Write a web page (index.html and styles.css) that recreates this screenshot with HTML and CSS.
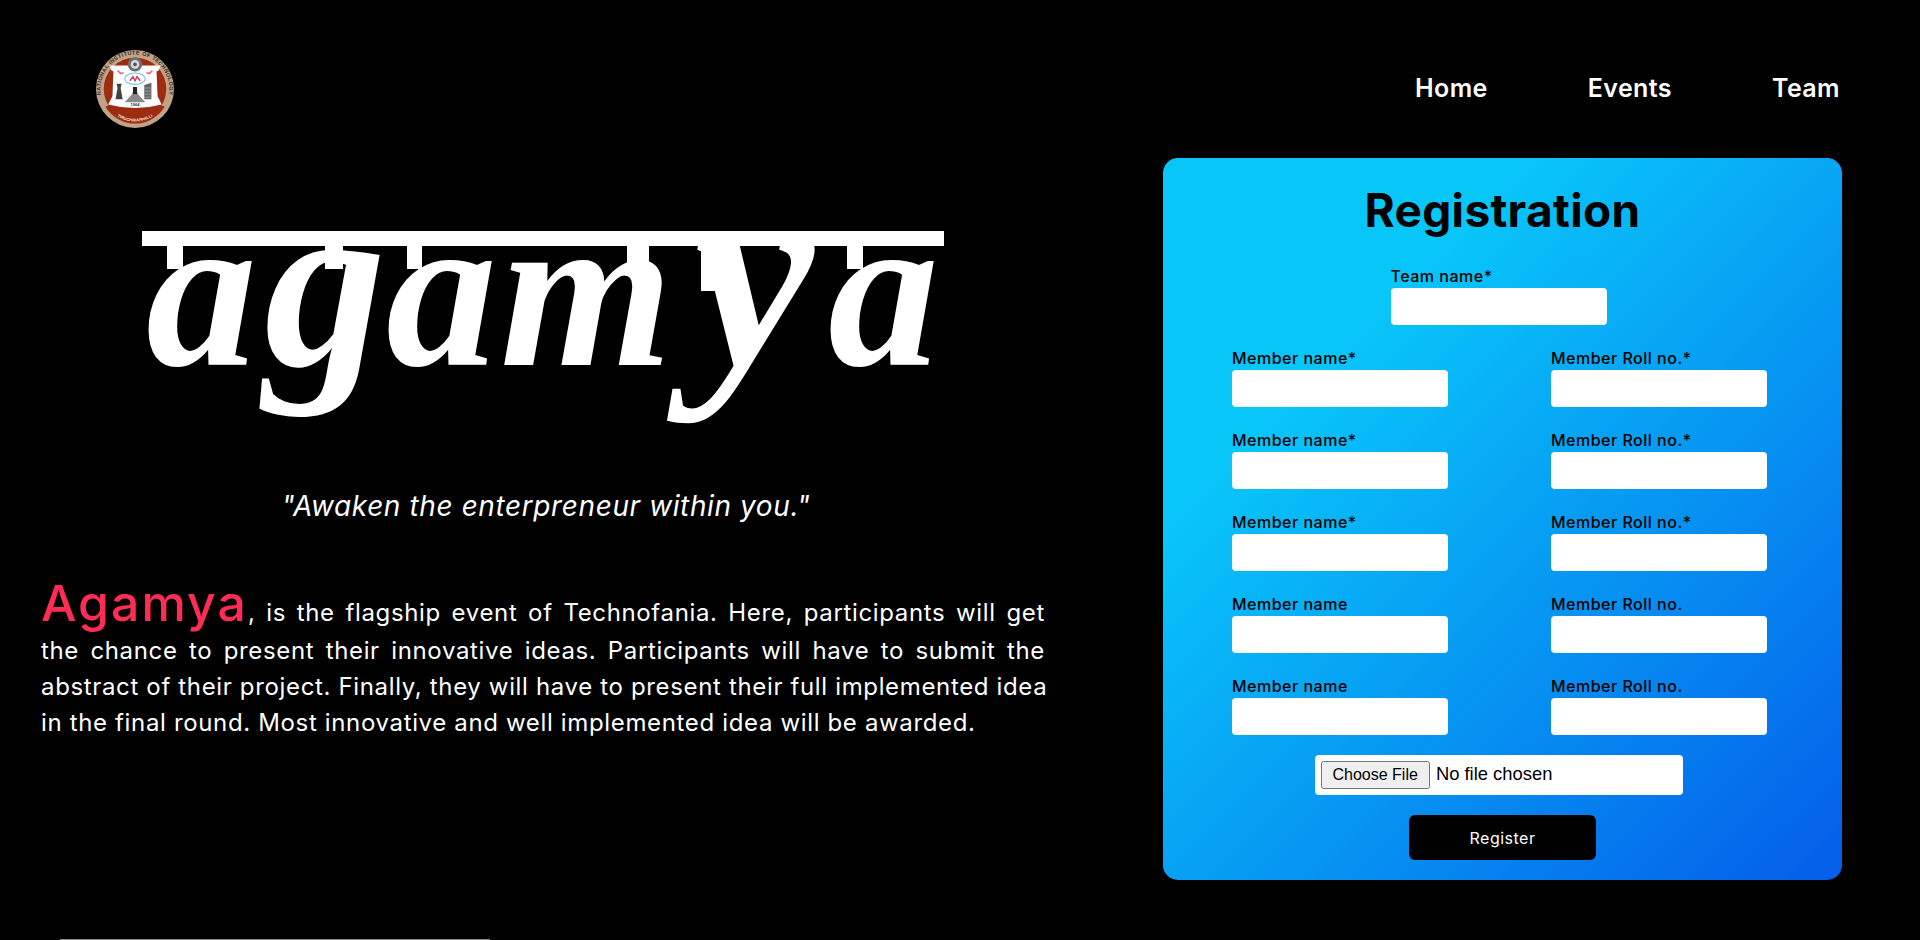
FILE: index.html
```html
<!DOCTYPE html>
<html lang="en">
<head>
<meta charset="utf-8">
<title>Agamya</title>
<link rel="stylesheet" href="styles.css">
</head>
<body>
<header class="site-header">
  <svg class="seal" viewBox="0 0 76 76" role="img" aria-label="National Institute of Technology Tiruchirappalli">
    <defs>
      <path id="sealTop" d="M9 54.8A33.5 33.5 0 1 1 67 54.8"/>
      <path id="sealBottom" d="M15 60A32 32 0 0 0 61 60"/>
    </defs>
    <circle cx="38" cy="38" r="38" fill="#bfa288"/>
    <circle cx="38" cy="38" r="30.5" fill="#9d2c10"/>
    <text class="seal-ring"><textPath href="#sealTop" startOffset="50%" text-anchor="middle">NATIONAL INSTITUTE OF TECHNOLOGY</textPath></text>
    <path d="M9 55A33.5 33.5 0 0 0 67 55L60 53H16Z" fill="#9d2c10"/>
    <text class="seal-city"><textPath href="#sealBottom" startOffset="50%" text-anchor="middle">TIRUCHIRAPPALLI</textPath></text>
    <path d="M13 15H63L61 20 59 21 60 45 64 53Q38 60 12 53L16 45 17 21 15 20Z" fill="#fff"/>
    <circle cx="38" cy="14" r="7" fill="#6d6d6d"/>
    <circle cx="38" cy="14" r="4.2" fill="#d9d9d9"/>
    <circle cx="38" cy="14" r="1.8" fill="#555"/>
    <path d="M21 20l3 3 3-1M55 20l-3 3-3-1" fill="none" stroke="#ee5a8c" stroke-width="1.4"/>
    <ellipse cx="38" cy="28" rx="10" ry="5.5" fill="#fff" stroke="#6cc0e8" stroke-width="1"/>
    <path d="M33 30l3-4 2 4 2-4 3 4" fill="none" stroke="#d24060" stroke-width="1.4"/>
    <path d="M20 33h5l-1 4 2 11h-7l2-11Z" fill="#444"/>
    <path d="M47 34l7-2v16h-7Z" fill="#666"/>
    <path d="M47 37h7M47 40h7M47 43h7M47 46h7" stroke="#bbb" stroke-width=".6"/>
    <path d="M38 37l3 6 7 8H28l7-8Z" fill="#8a8a8a"/>
    <path d="M36 36h4v7h-4Z" fill="#222"/>
    <text class="seal-year" x="38" y="54.5" text-anchor="middle">1964</text>
  </svg>
  <nav class="main-nav">
    <a href="#home">Home</a>
    <a href="#events">Events</a>
    <a href="#team">Team</a>
  </nav>
</header>

<main class="page-main">
  <section class="intro">
    <svg class="wordmark" viewBox="0 0 802 216" role="img" aria-label="agamya">
      <text class="wordmark-text" y="134"><tspan x="4">a</tspan><tspan x="122" class="wordmark-mid">g</tspan><tspan x="244">a</tspan><tspan x="358">m</tspan><tspan x="552" class="wordmark-tall">y</tspan><tspan x="686">a</tspan></text>
      <rect class="wordmark-ink" x="0" y="0" width="802" height="15"/>
      <rect class="wordmark-ink" x="25" y="10" width="16" height="28"/>
      <rect class="wordmark-ink" x="183" y="10" width="18" height="28"/>
      <rect class="wordmark-ink" x="265" y="10" width="15" height="28"/>
      <rect class="wordmark-ink" x="485" y="10" width="22" height="26"/>
      <rect class="wordmark-ink" x="559" y="10" width="24" height="50"/>
      <rect class="wordmark-ink" x="705" y="10" width="16" height="28"/>
    </svg>
    <p class="tagline">"Awaken the enterpreneur within you."</p>
    <p class="about">
      <span class="about-line"><span class="about-name">Agamya</span>, is the flagship event of Technofania. Here, participants will get</span>
      <span class="about-line">the chance to present their innovative ideas. Participants will have to submit the</span>
      <span class="about-line">abstract of their project. Finally, they will have to present their full implemented idea</span>
      <span class="about-line about-last">in the final round. Most innovative and well implemented idea will be awarded.</span>
    </p>
  </section>

  <form class="reg-card">
    <h1 class="reg-title">Registration</h1>
    <div class="reg-fields">
      <label class="field field-solo"><span>Team name*</span><input type="text" class="text-input"></label>
      <div class="member-grid">
        <label class="field"><span>Member name*</span><input type="text" class="text-input"></label>
        <label class="field"><span>Member Roll no.*</span><input type="text" class="text-input"></label>
        <label class="field"><span>Member name*</span><input type="text" class="text-input"></label>
        <label class="field"><span>Member Roll no.*</span><input type="text" class="text-input"></label>
        <label class="field"><span>Member name*</span><input type="text" class="text-input"></label>
        <label class="field"><span>Member Roll no.*</span><input type="text" class="text-input"></label>
        <label class="field"><span>Member name</span><input type="text" class="text-input"></label>
        <label class="field"><span>Member Roll no.</span><input type="text" class="text-input"></label>
        <label class="field"><span>Member name</span><input type="text" class="text-input"></label>
        <label class="field"><span>Member Roll no.</span><input type="text" class="text-input"></label>
      </div>
      <input type="file" class="file-input">
    </div>
    <button type="button" class="reg-button">Register</button>
  </form>
</main>

<footer class="site-footer"><div class="footer-rule"></div></footer>
</body>
</html>
```
FILE: styles.css
```css
* { box-sizing: border-box; }

html, body {
  margin: 0;
  height: 940px;
  overflow: hidden;
  background: #000;
}

body {
  color: #fff;
  font-family: Inter, "Open Sans", "Liberation Sans", sans-serif;
}

.site-header {
  display: flex;
  align-items: center;
  justify-content: space-between;
  padding: 50px 80px 30px 96px;
}

.seal {
  width: 78px;
  height: 78px;
  display: block;
}

.seal-ring {
  font: 700 5.4px "Liberation Sans", sans-serif;
  letter-spacing: .35px;
  fill: #3a2a20;
}

.seal-city {
  font: 700 4px "Liberation Sans", sans-serif;
  fill: #f3e6da;
}

.seal-year {
  font: 700 4px "Liberation Sans", sans-serif;
  fill: #333;
}

.main-nav {
  display: flex;
  gap: 100px;
  padding-bottom: 2px;
}

.main-nav a {
  color: #fff;
  font-size: 25px;
  font-weight: 600;
  letter-spacing: .4px;
  line-height: 34px;
  text-decoration: none;
}

.page-main {
  display: flex;
  align-items: flex-start;
  padding-left: 41px;
}

.intro {
  width: 1004px;
  padding-top: 73px;
}

.wordmark {
  display: block;
  width: 802px;
  height: 216px;
  margin-left: 101px;
  overflow: visible;
}

.wordmark-text {
  font: italic 700 222px "Liberation Serif", serif;
  fill: #fff;
}

.wordmark-mid { font-size: 244px; }

.wordmark-tall { font-size: 270px; }

.wordmark-ink { fill: #fff; }

.tagline {
  margin: 39px 0 0;
  padding-left: 6px;
  text-align: center;
  font-size: 28px;
  font-style: italic;
  letter-spacing: .6px;
  line-height: 40px;
}

.about {
  margin: 47px 0 0;
  font-size: 24px;
  letter-spacing: .65px;
  line-height: 36px;
}

.about-line {
  display: block;
  white-space: nowrap;
  text-align: justify;
  text-align-last: justify;
}

.about-last { text-align-last: left; }

.about-name {
  color: #ff2d55;
  font-size: 50px;
  font-weight: 500;
  letter-spacing: 2px;
  line-height: 60px;
}

.reg-card {
  width: 679px;
  height: 722px;
  margin-left: 118px;
  padding: 19px 0 0;
  border-radius: 15px;
  background: linear-gradient(315deg, #045de9 0%, #09c6f9 74%);
  color: #000;
  display: flex;
  flex-direction: column;
  align-items: center;
}

.reg-title {
  margin: 0 0 21px;
  font-size: 46px;
  line-height: 66px;
  font-weight: 700;
  letter-spacing: .3px;
}

.reg-fields {
  display: flex;
  flex-direction: column;
  align-items: center;
  gap: 21px;
  padding-right: 6px;
}

.member-grid {
  display: grid;
  grid-template-columns: 216px 216px;
  column-gap: 103px;
  row-gap: 21px;
}

.field {
  display: block;
  width: 216px;
  font-size: 16px;
  font-weight: 500;
  letter-spacing: .5px;
  line-height: 24px;
}

.field-solo { margin-right: 2px; }

.field span { display: block; }

.text-input {
  display: block;
  width: 216px;
  height: 37px;
  border: 0;
  border-radius: 4px;
  background: #fff;
}

.file-input {
  display: block;
  width: 368px;
  height: 40px;
  margin: -1px 2px 0 0;
  padding: 6px;
  border-radius: 4px;
  background: #fff;
  color: #000;
  font: 18.4px "Liberation Sans", sans-serif;
}

.file-input::file-selector-button {
  height: 28px;
  margin-right: 6px;
  padding: 0 10px;
  font: 16px "Liberation Sans", sans-serif;
}

.reg-button {
  width: 187px;
  height: 45px;
  margin-top: 20px;
  border: 0;
  border-radius: 6px;
  background: #000;
  color: #fff;
  font: 400 16px Inter, "Liberation Sans", sans-serif;
  letter-spacing: .5px;
}

.site-footer {
  padding: 59px 0 0 60px;
}

.footer-rule {
  width: 430px;
  height: 1px;
  background: #888;
}
```
